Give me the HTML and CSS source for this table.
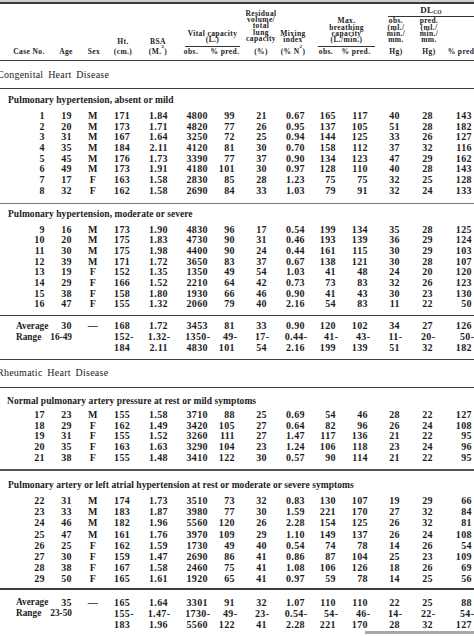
FILE: index.html
```html
<!DOCTYPE html>
<html lang="en">
<head>
<meta charset="utf-8">
<title>Table</title>
<link rel="stylesheet" href="styles.css">
</head>
<body>
<div class="page">
  <div class="top-band"></div>
  <div class="top-rule"></div>

  <div class="thead">
    <div class="hu c1">Case No.</div>
    <div class="hu c2">Age</div>
    <div class="hu c3">Sex</div>
    <div class="hc rb c4 lo"><div>Ht.</div></div>
    <div class="hu c4">(cm.)</div>
    <div class="hc rb c5 lo"><div>BSA</div></div>
    <div class="hu c5">(M.<sup>2</sup>)</div>
    <div class="hc rb vc ul"><div>Vital capacity</div><div>(L.)</div></div>
    <div class="hu c6">obs.</div>
    <div class="hu c7">% pred.</div>
    <div class="hc rab c8 rv"><div>Residual</div><div>volume/</div><div>total</div><div>lung</div><div>capacity</div></div>
    <div class="hu c8">(%)</div>
    <div class="hc rb c9"><div>Mixing</div><div>index</div></div>
    <div class="hu c9">(% N<sub>2</sub>)</div>
    <div class="hc rb mbc ul"><div>Max.</div><div>breathing</div><div>capacity</div><div>(L./min.)</div></div>
    <div class="hu c10">obs.</div>
    <div class="hu c11">% pred.</div>
    <div class="dl">DL<sub>CO</sub></div>
    <div class="hc rb c12"><div>obs.</div><div>(ml./</div><div>min./</div><div>mm.</div></div>
    <div class="hu c12">Hg)</div>
    <div class="hc rb c13"><div>pred.</div><div>(ml./</div><div>min./</div><div>mm.</div></div>
    <div class="hu c13">Hg)</div>
    <div class="hu c14">% pred</div>
  </div>

  <div class="sec sec-a">Congenital Heart Disease</div>

  <div class="sub sub-1">Pulmonary hypertension, absent or mild</div>
  <div class="rows">
    <div class="row"><span>1</span><span>19</span><span>M</span><span>171</span><span>1.84</span><span>4800</span><span>99</span><span>21</span><span>0.67</span><span>165</span><span>117</span><span>40</span><span>28</span><span>143</span></div>
    <div class="row"><span>2</span><span>20</span><span>M</span><span>173</span><span>1.71</span><span>4820</span><span>77</span><span>26</span><span>0.95</span><span>137</span><span>105</span><span>51</span><span>28</span><span>182</span></div>
    <div class="row"><span>3</span><span>31</span><span>M</span><span>167</span><span>1.64</span><span>3250</span><span>72</span><span>25</span><span>0.94</span><span>144</span><span>125</span><span>33</span><span>26</span><span>127</span></div>
    <div class="row"><span>4</span><span>35</span><span>M</span><span>184</span><span>2.11</span><span>4120</span><span>81</span><span>30</span><span>0.70</span><span>158</span><span>112</span><span>37</span><span>32</span><span>116</span></div>
    <div class="row"><span>5</span><span>45</span><span>M</span><span>176</span><span>1.73</span><span>3390</span><span>77</span><span>37</span><span>0.90</span><span>134</span><span>123</span><span>47</span><span>29</span><span>162</span></div>
    <div class="row"><span>6</span><span>49</span><span>M</span><span>173</span><span>1.91</span><span>4180</span><span>101</span><span>30</span><span>0.97</span><span>128</span><span>110</span><span>40</span><span>28</span><span>143</span></div>
    <div class="row"><span>7</span><span>17</span><span>F</span><span>163</span><span>1.58</span><span>2830</span><span>85</span><span>28</span><span>1.23</span><span>75</span><span>75</span><span>32</span><span>25</span><span>128</span></div>
    <div class="row"><span>8</span><span>32</span><span>F</span><span>162</span><span>1.58</span><span>2690</span><span>84</span><span>33</span><span>1.03</span><span>79</span><span>91</span><span>32</span><span>24</span><span>133</span></div>
  </div>
  <div class="rule-thin r-1"></div>

  <div class="sub sub-2">Pulmonary hypertension, moderate or severe</div>
  <div class="rows">
    <div class="row"><span>9</span><span>16</span><span>M</span><span>173</span><span>1.90</span><span>4830</span><span>96</span><span>17</span><span>0.54</span><span>199</span><span>134</span><span>35</span><span>28</span><span>125</span></div>
    <div class="row"><span>10</span><span>20</span><span>M</span><span>175</span><span>1.83</span><span>4730</span><span>90</span><span>31</span><span>0.46</span><span>193</span><span>139</span><span>36</span><span>29</span><span>124</span></div>
    <div class="row"><span>11</span><span>30</span><span>M</span><span>175</span><span>1.98</span><span>4400</span><span>90</span><span>24</span><span>0.44</span><span>161</span><span>115</span><span>30</span><span>29</span><span>103</span></div>
    <div class="row"><span>12</span><span>39</span><span>M</span><span>171</span><span>1.72</span><span>3650</span><span>83</span><span>37</span><span>0.67</span><span>138</span><span>121</span><span>30</span><span>28</span><span>107</span></div>
    <div class="row"><span>13</span><span>19</span><span>F</span><span>152</span><span>1.35</span><span>1350</span><span>49</span><span>54</span><span>1.03</span><span>41</span><span>48</span><span>24</span><span>20</span><span>120</span></div>
    <div class="row"><span>14</span><span>29</span><span>F</span><span>166</span><span>1.52</span><span>2210</span><span>64</span><span>42</span><span>0.73</span><span>73</span><span>83</span><span>32</span><span>26</span><span>123</span></div>
    <div class="row"><span>15</span><span>38</span><span>F</span><span>158</span><span>1.80</span><span>1930</span><span>66</span><span>46</span><span>0.90</span><span>41</span><span>43</span><span>30</span><span>23</span><span>130</span></div>
    <div class="row"><span>16</span><span>47</span><span>F</span><span>155</span><span>1.32</span><span>2060</span><span>79</span><span>40</span><span>2.16</span><span>54</span><span>83</span><span>11</span><span>22</span><span>50</span></div>
  </div>
  <div class="rule r-2"></div>

  <div class="summary sum-1">
    <div class="row"><span class="lbl">Average</span><span>30</span><span>—</span><span>168</span><span>1.72</span><span>3453</span><span>81</span><span>33</span><span>0.90</span><span>120</span><span>102</span><span>34</span><span>27</span><span>126</span></div>
    <div class="row"><span class="lbl">Range</span><span class="rg">16-49</span><span></span><span>152<span class="hy">-</span></span><span>1.32<span class="hy">-</span></span><span>1350<span class="hy">-</span></span><span>49<span class="hy">-</span></span><span>17<span class="hy">-</span></span><span>0.44<span class="hy">-</span></span><span>41<span class="hy">-</span></span><span>43<span class="hy">-</span></span><span>11<span class="hy">-</span></span><span>20<span class="hy">-</span></span><span>50<span class="hy">-</span></span></div>
    <div class="row"><span></span><span></span><span></span><span>184</span><span>2.11</span><span>4830</span><span>101</span><span>54</span><span>2.16</span><span>199</span><span>139</span><span>51</span><span>32</span><span>182</span></div>
  </div>
  <div class="rule"></div>

  <div class="sec sec-b">Rheumatic Heart Disease</div>

  <div class="sub sub-3">Normal pulmonary artery pressure at rest or mild symptoms</div>
  <div class="rows rows-3">
    <div class="row"><span>17</span><span>23</span><span>M</span><span>155</span><span>1.58</span><span>3710</span><span>88</span><span>25</span><span>0.69</span><span>54</span><span>46</span><span>28</span><span>22</span><span>127</span></div>
    <div class="row"><span>18</span><span>29</span><span>F</span><span>162</span><span>1.49</span><span>3420</span><span>105</span><span>27</span><span>0.64</span><span>82</span><span>96</span><span>26</span><span>24</span><span>108</span></div>
    <div class="row"><span>19</span><span>31</span><span>F</span><span>155</span><span>1.52</span><span>3260</span><span>111</span><span>27</span><span>1.47</span><span>117</span><span>136</span><span>21</span><span>22</span><span>95</span></div>
    <div class="row"><span>20</span><span>35</span><span>F</span><span>163</span><span>1.63</span><span>3290</span><span>104</span><span>23</span><span>1.24</span><span>106</span><span>118</span><span>23</span><span>24</span><span>96</span></div>
    <div class="row"><span>21</span><span>38</span><span>F</span><span>155</span><span>1.48</span><span>3410</span><span>122</span><span>30</span><span>0.57</span><span>90</span><span>114</span><span>21</span><span>22</span><span>95</span></div>
  </div>
  <div class="rule r-3"></div>

  <div class="sub sub-4">Pulmonary artery or left atrial hypertension at rest or moderate or severe symptoms</div>
  <div class="rows rows-4">
    <div class="row"><span>22</span><span>31</span><span>M</span><span>174</span><span>1.73</span><span>3510</span><span>73</span><span>32</span><span>0.83</span><span>130</span><span>107</span><span>19</span><span>29</span><span>66</span></div>
    <div class="row"><span>23</span><span>33</span><span>M</span><span>183</span><span>1.87</span><span>3980</span><span>77</span><span>30</span><span>1.59</span><span>221</span><span>170</span><span>27</span><span>32</span><span>84</span></div>
    <div class="row"><span>24</span><span>46</span><span>M</span><span>182</span><span>1.96</span><span>5560</span><span>120</span><span>26</span><span>2.28</span><span>154</span><span>125</span><span>26</span><span>32</span><span>81</span></div>
    <div class="row"><span>25</span><span>47</span><span>M</span><span>161</span><span>1.76</span><span>3970</span><span>109</span><span>29</span><span>1.10</span><span>149</span><span>137</span><span>26</span><span>24</span><span>108</span></div>
    <div class="row"><span>26</span><span>25</span><span>F</span><span>162</span><span>1.59</span><span>1730</span><span>49</span><span>40</span><span>0.54</span><span>74</span><span>78</span><span>14</span><span>26</span><span>54</span></div>
    <div class="row"><span>27</span><span>30</span><span>F</span><span>159</span><span>1.47</span><span>2690</span><span>86</span><span>41</span><span>0.86</span><span>87</span><span>104</span><span>25</span><span>23</span><span>109</span></div>
    <div class="row"><span>28</span><span>38</span><span>F</span><span>167</span><span>1.58</span><span>2460</span><span>75</span><span>41</span><span>1.08</span><span>106</span><span>126</span><span>18</span><span>26</span><span>69</span></div>
    <div class="row"><span>29</span><span>50</span><span>F</span><span>165</span><span>1.61</span><span>1920</span><span>65</span><span>41</span><span>0.97</span><span>59</span><span>78</span><span>14</span><span>25</span><span>56</span></div>
  </div>
  <div class="rule r-4"></div>

  <div class="summary sum-2">
    <div class="row"><span class="lbl">Average</span><span>35</span><span>—</span><span>165</span><span>1.64</span><span>3301</span><span>91</span><span>32</span><span>1.07</span><span>110</span><span>110</span><span>22</span><span>25</span><span>88</span></div>
    <div class="row"><span class="lbl">Range</span><span class="rg">23-50</span><span></span><span>155<span class="hy">-</span></span><span>1.47<span class="hy">-</span></span><span>1730<span class="hy">-</span></span><span>49<span class="hy">-</span></span><span>23<span class="hy">-</span></span><span>0.54<span class="hy">-</span></span><span>54<span class="hy">-</span></span><span>46<span class="hy">-</span></span><span>14<span class="hy">-</span></span><span>22<span class="hy">-</span></span><span>54<span class="hy">-</span></span></div>
    <div class="row"><span></span><span></span><span></span><span>183</span><span>1.96</span><span>5560</span><span>122</span><span>41</span><span>2.28</span><span>221</span><span>170</span><span>28</span><span>32</span><span>127</span></div>
  </div>
  <div class="bottom-edge"></div>
</div>
</body>
</html>
```

FILE: styles.css
```css
* { box-sizing: border-box; margin: 0; padding: 0; }
html, body { background: #ffffff; }
body {
  width: 474px;
  height: 636px;
  overflow: hidden;
  font-family: "Liberation Serif", "Times New Roman", serif;
  color: #1c1c1c;
}
.page { width: 474px; overflow: hidden; }

.top-band { height: 2px; background: #cfcfcf; }
.top-rule { height: 2px; background: #3a3a3a; }

/* ---------- header ---------- */
.thead {
  display: grid;
  width: 480px;
  grid-template-columns: 58px 16px 40px 18px 52px 14px 54px 18px 46px 20px 40px 40px 26px 38px;
  grid-template-rows: 13px 29.5px 13.5px;
  font-size: 7.5px;
  font-weight: bold;
  letter-spacing: 0.4px;
  border-bottom: 1.5px solid #3a3a3a;
}
.hc {
  display: flex;
  flex-direction: column;
  align-items: center;
  justify-content: flex-end;
  white-space: nowrap;
  line-height: 6.3px;
  padding-bottom: 3px;
}
.hu {
  grid-row: 3;
  display: flex;
  justify-content: center;
  white-space: nowrap;
  line-height: 9px;
}
.rb { grid-row: 2; }
.rab { grid-row: 1 / 3; }
.lo { padding-bottom: 1.5px; }
.rv { padding-bottom: 4.3px; }
.ul { border-bottom: 1px solid #333; padding-bottom: 2px; }
.vc { grid-column: 6 / 8; margin: 0 12px 0 1px; }
.mbc { grid-column: 10 / 12; margin: 0 1px 0 2px; }
.dl {
  grid-row: 1;
  grid-column: 12 / 15;
  margin: 0 6px 0 12px;
  text-align: center;
  line-height: 12px;
  font-size: 9px;
  letter-spacing: 0.2px;
  border-bottom: 1px solid #333;
}
.dl sub { font-size: 5.5px; vertical-align: -1px; line-height: 0; }
.hu sup { font-size: 5px; vertical-align: 2.5px; line-height: 0; }
.hu sub { font-size: 5px; vertical-align: -1px; line-height: 0; }

.c1 { grid-column: 1; }
.c2 { grid-column: 2; }
.c3 { grid-column: 3; }
.c4 { grid-column: 4; }
.c5 { grid-column: 5; }
.c6 { grid-column: 6; }
.c7 { grid-column: 7; }
.c8 { grid-column: 8; }
.c9 { grid-column: 9; }
.c10 { grid-column: 10; }
.c11 { grid-column: 11; }
.c12 { grid-column: 12; }
.c13 { grid-column: 13; }
.c14 { grid-column: 14; }

/* ---------- section headings ---------- */
.sec {
  font-size: 10px;
  line-height: 10.7px;
  letter-spacing: 0.25px;
  word-spacing: 2px;
  text-indent: -3px;
  white-space: nowrap;
  border-bottom: 1.5px solid #3a3a3a;
}
.sec-a { padding: 9px 0 6.8px; }
.sec-b { padding: 8.1px 0 7.65px; }

.sub {
  font-size: 9.5px;
  font-weight: bold;
  line-height: 10.7px;
  padding-left: 8px;
  white-space: nowrap;
  letter-spacing: 0.05px;
}
.sub-1 { padding-top: 6.15px; padding-bottom: 5.5px; }
.sub-2 { padding-top: 4.3px; padding-bottom: 5.25px; }
.sub-3 { padding-top: 8.15px; padding-bottom: 3.3px; padding-left: 7px; }
.sub-4 { padding-top: 8.85px; padding-bottom: 4.9px; }

/* ---------- data rows ---------- */
.row {
  display: grid;
  grid-template-columns: 45px 27px 42px 16px 38px 40px 27px 32px 38px 31px 32px 32px 33px 39px;
  height: 10.7px;
  line-height: 10.7px;
  font-size: 10px;
  font-weight: bold;
  text-align: right;
  white-space: nowrap;
  letter-spacing: 0.4px;
}
.row > span:nth-child(3) { text-align: center; }
.rows-3 .row { height: 10.75px; line-height: 10.75px; }
.rows-4 .row { height: 11.1px; line-height: 11.1px; }
.hy { margin-right: -2.5px; }
.row > .lbl { text-align: left; padding-left: 16px; font-size: 9.3px; letter-spacing: 0; }
.row > .rg { font-size: 9.3px; letter-spacing: 0; }

.summary.sum-1 { padding: 5.4px 0 5px; }
.summary.sum-1 .row { height: 10.8px; line-height: 10.8px; }
.summary.sum-2 { padding-top: 7px; }
.summary.sum-2 .row { height: 11px; line-height: 11px; }

/* ---------- rules ---------- */
.rule { height: 1.5px; background: #3d3d3d; }
.rule-thin { height: 1px; background: #7a7a7a; }
.r-1 { margin-top: 7px; }
.r-2 { margin-top: 4.5px; }
.r-3 { margin-top: 5.6px; background: #555555; }
.r-4 { margin-top: 4.25px; }

.bottom-edge {
  margin: 1.5px 0 0 365px;
  height: 3px;
  background: #a8a8a8;
}
```
